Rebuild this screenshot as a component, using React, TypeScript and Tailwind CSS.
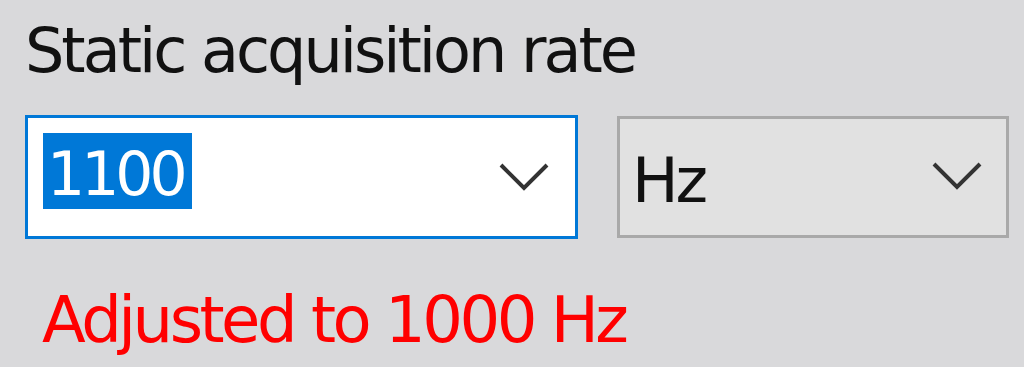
export default function App() {
  return (
    <div className="w-[1024px] h-[367px] overflow-hidden bg-[#d9d9db] pl-[25px] pt-[20px] font-['DejaVu_Sans',sans-serif]">
      <div className="text-[62px] leading-[62px] tracking-[-3px] text-[#111] whitespace-nowrap">
        Static acquisition rate
      </div>

      <div className="mt-[33px] flex items-start">
        {/* editable combo, focused */}
        <div className="w-[553px] h-[124px] border-[3px] border-[#0078d7] bg-white flex items-start">
          <div className="ml-[15px] mt-[15px] w-[149px] h-[76px] bg-[#0078d7] pl-[4px] pt-[6px]">
            <div className="text-[60px] leading-[70px] tracking-[-4px] text-white">1100</div>
          </div>
          <svg
            className="ml-auto mr-[26px] mt-[45px]"
            width="50"
            height="28"
            viewBox="0 0 50 28"
            fill="none"
            stroke="#333"
            strokeWidth={4}
          >
            <polyline points="2,2 25,25 48,2" />
          </svg>
        </div>

        {/* unit combo */}
        <div className="ml-[39px] mt-[1px] w-[392px] h-[122px] border-[3px] border-[#a9a9a9] bg-[#e1e1e1] flex items-start">
          <div className="ml-[12px] mt-[31px] text-[62px] leading-[62px] tracking-[-3px] text-[#111]">Hz</div>
          <svg
            className="ml-auto mr-[24px] mt-[43px]"
            width="50"
            height="28"
            viewBox="0 0 50 28"
            fill="none"
            stroke="#333"
            strokeWidth={4}
          >
            <polyline points="2,2 25,25 48,2" />
          </svg>
        </div>
      </div>

      <div className="mt-[49px] ml-[17px] text-[64px] leading-[64px] tracking-[-3.5px] text-[#ff0000] whitespace-nowrap">
        Adjusted to 1000 Hz
      </div>
    </div>
  );
}
